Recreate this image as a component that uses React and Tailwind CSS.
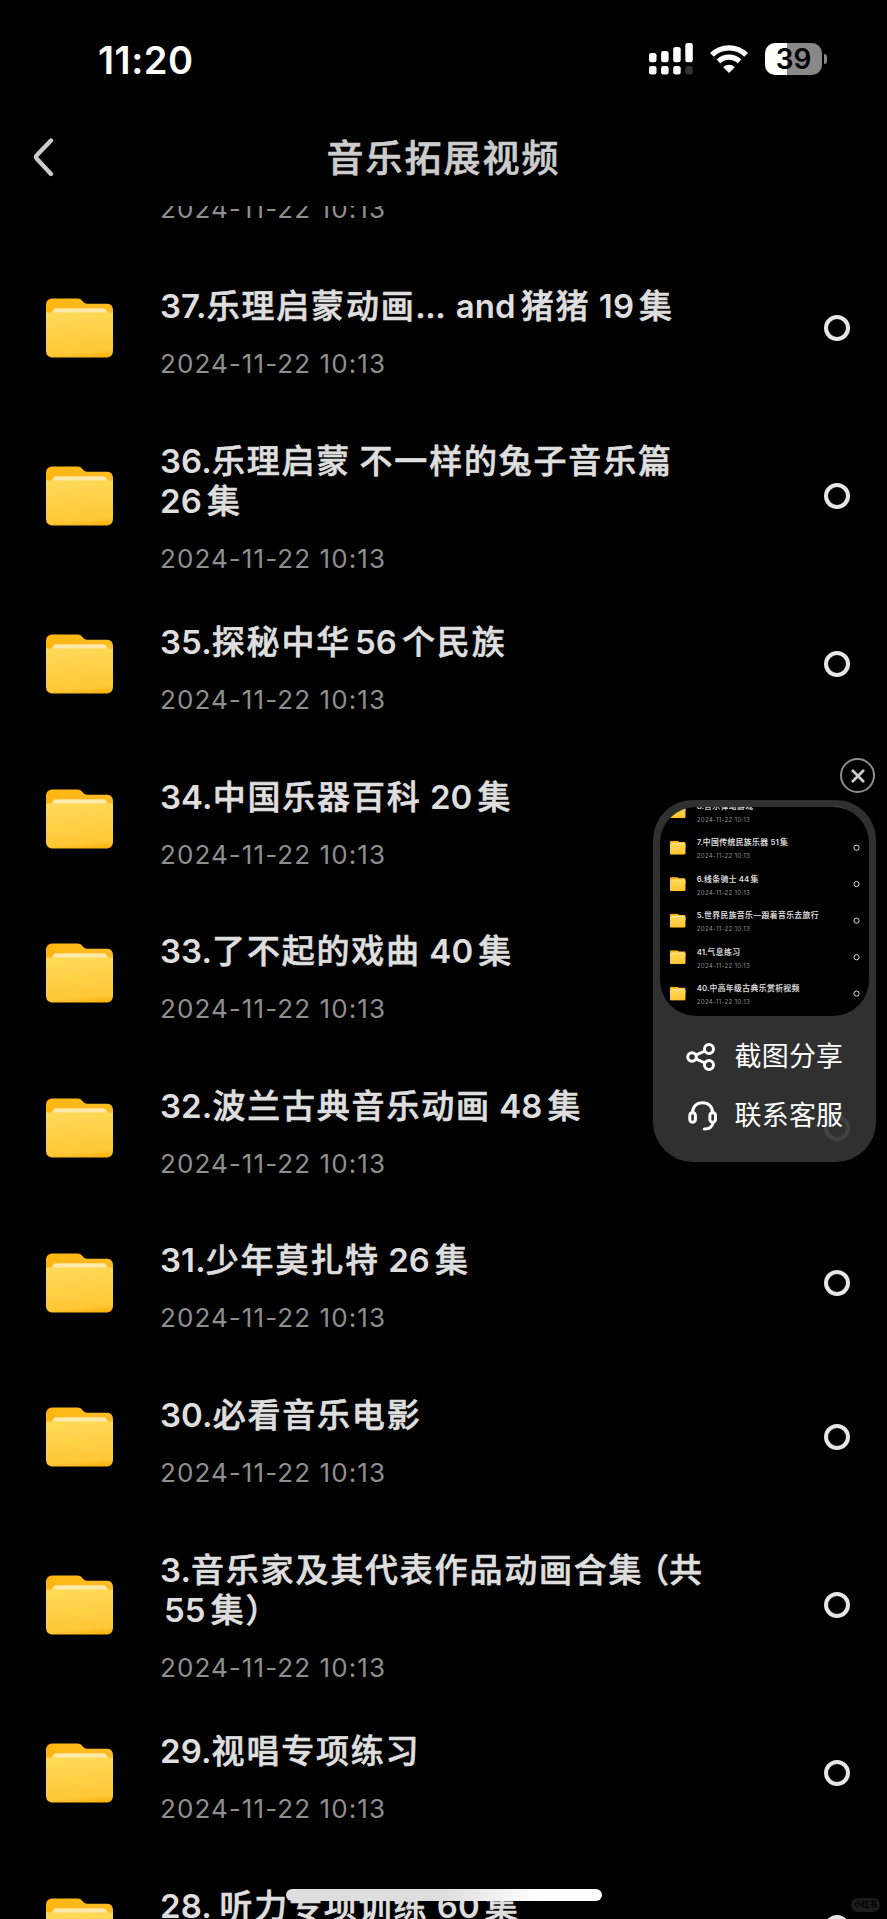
const DATE = "2024-11-22 10:13";

const files = [
  { lines: ["37.乐理启蒙动画… and猪猪 19集"] },
  { lines: ["36.乐理启蒙 不一样的兔子音乐篇", "26集"] },
  { lines: ["35.探秘中华56个民族"] },
  { lines: ["34.中国乐器百科 20集"] },
  { lines: ["33.了不起的戏曲 40集"] },
  { lines: ["32.波兰古典音乐动画 48集"] },
  { lines: ["31.少年莫扎特 26集"] },
  { lines: ["30.必看音乐电影"] },
  { lines: ["3.音乐家及其代表作品动画合集（共", "55集）"], indent: true },
  { lines: ["29.视唱专项练习"] },
  { lines: ["28. 听力专项训练 60集"] },
];

const previewFiles = [
  { lines: ["8.音乐律动游戏"] },
  { lines: ["7.中国传统民族乐器 51集"] },
  { lines: ["6.线条骑士 44集"] },
  { lines: ["5.世界民族音乐—跟着音乐去旅行"] },
  { lines: ["41.气息练习"] },
  { lines: ["40.中高年级古典乐赏析视频"] },
];

function Folder() {
  return (
    <svg className="h-[60px] w-[67px] shrink-0" viewBox="0 0 67 60" fill="none">
      <defs>
        <linearGradient id="front" x1="30" y1="14" x2="34" y2="60" gradientUnits="userSpaceOnUse">
          <stop offset="0" stopColor="#ffd957" />
          <stop offset="0.88" stopColor="#ffc836" />
          <stop offset="1" stopColor="#ffb514" />
        </linearGradient>
        <linearGradient id="back" x1="0" y1="0" x2="67" y2="10" gradientUnits="userSpaceOnUse">
          <stop offset="0" stopColor="#ffb70f" />
          <stop offset="1" stopColor="#ffbb26" />
        </linearGradient>
      </defs>
      <path d="M0 7.500C0 3 2.500.5 7 .5h24.500c2.200 0 3.300.8 4.600 2.200l1.600 1.600c1 1 1.900 1.400 3.300 1.400h19.500c4.500 0 6.500 2.500 6.500 6.500V30H0Z" fill="url(#back)" />
      <path d="M6 16c.4-4 2-5.700 5-5.700h45.500c3 0 4.400 1.700 5 5.700Z" fill="#ffe8a8" />
      <path d="M0 14.400h67v38.100c0 4.500-2.500 7-7 7H7c-4.500 0-7-2.500-7-7Z" fill="url(#front)" />
    </svg>
  );
}

function TitleLine({ text, indent }) {
  const runs = text.match(/[ -~]+|[（）]|[^ -~（）]+/g);
  return (
    <div className={indent ? "flex whitespace-pre pl-[4px]" : "flex whitespace-pre"}>
      {runs.map((run, i) => {
        if (run === "（") return <span key={i} className="ml-[9px] font-medium [-webkit-text-stroke:0.6px_#dedede] [font-feature-settings:'halt']">{run}</span>;
        if (run === "）") return <span key={i} className="font-medium [-webkit-text-stroke:0.6px_#dedede] [font-feature-settings:'halt']">{run}</span>;
        if (/^[ -~]/.test(run)) {
          const lead = i > 0 && run[0] !== " " ? "ml-1" : "";
          const trail = /[0-9a-z]$/.test(run) ? "mr-[5px]" : "";
          return <span key={i} className={`${lead} ${trail} tracking-[0.1px]`}>{run}</span>;
        }
        return <span key={i} className="font-medium tracking-[1.8px] [-webkit-text-stroke:0.6px_#dedede]">{run}</span>;
      })}
    </div>
  );
}

function FileDate() {
  return <div className="text-[26px] leading-[32px] tracking-[1.080px] text-[#8f8f8f]">{DATE}</div>;
}

function FileRow({ file }) {
  return (
    <li className="flex min-h-[154.600px] shrink-0 items-center pl-[46px] pr-[37px]">
      <Folder />
      <div className="ml-[47px] grow self-start pt-[35px] pb-[12.400px]">
        <div className="mb-[22px] text-[33px] leading-[40px] font-semibold text-[#dedede]">
          {file.lines.map((line, i) => (
            <TitleLine key={line} text={line} indent={file.indent && i === 1} />
          ))}
        </div>
        <FileDate />
      </div>
      <span className="size-[26px] shrink-0 rounded-full border-4 border-[#e6e6e6]" />
    </li>
  );
}

function StatusBar() {
  return (
    <div className="flex h-[118px] shrink-0 items-center justify-between pr-[60px] pl-[98px]">
      <span className="pt-px text-[38px] leading-none font-semibold tracking-[0.500px] text-white">11:20</span>
      <div className="flex items-center">
        <svg className="h-8 w-11" viewBox="0 0 44 32" fill="#fff">
          <rect x="0" y="10" width="7.500" height="9.300" rx="2.300" />
          <rect x="12.100" y="8" width="7.500" height="11.300" rx="2.300" />
          <rect x="24.200" y="4" width="7.500" height="15.300" rx="2.300" />
          <rect x="36.300" y="0" width="7.500" height="19.300" rx="2.300" />
          <rect x="0" y="23" width="7.500" height="8.600" rx="2.300" />
          <rect x="12.100" y="23" width="7.500" height="8.600" rx="2.300" />
          <rect x="24.200" y="23" width="7.500" height="8.600" rx="2.300" />
          <rect x="36.300" y="23" width="7.500" height="8.600" rx="2.300" fill="#333" />
        </svg>
        <svg className="ml-[17px] h-7 w-[38px]" viewBox="0 0 38 28" fill="none" stroke="#fff" strokeWidth="5.300">
          <path d="M1.900 9.900a24.300 24.300 0 0 1 34.200 0" />
          <path d="M8.500 16.500a14.900 14.900 0 0 1 21 0" />
          <path d="M13.200 22.200a8.300 8.300 0 0 1 11.600 0L19 28Z" fill="#fff" stroke="none" />
        </svg>
        <div className="ml-[17px] flex h-8 w-[57px] items-center justify-center rounded-[10px] bg-linear-to-r from-white from-[39%] to-[#888] to-[39%] text-[28px] leading-none font-semibold text-black">
          39
        </div>
        <span className="ml-[2px] h-[10px] w-[3px] rounded-r-full bg-[#888]" />
      </div>
    </div>
  );
}

function ShareIcon() {
  return (
    <svg className="h-[30px] w-[31px]" viewBox="0 0 31 30" fill="none" stroke="#fff" strokeWidth="3">
      <circle cx="6" cy="15" r="4.300" />
      <circle cx="23" cy="7" r="4.500" />
      <circle cx="23" cy="23" r="4.500" />
      <path d="M9.700 13.200 19 9M9.700 16.800l9.300 4.200" />
    </svg>
  );
}

function HeadsetIcon() {
  return (
    <svg className="h-[30px] w-[31px]" viewBox="0 0 31 30" fill="none" stroke="#fff" strokeWidth="3" strokeLinecap="round">
      <path d="M6.500 12C6.500 5.800 10.500 1.700 16.500 1.700s10.200 4.100 10.200 10.300" />
      <rect x="3.800" y="11.600" width="5.600" height="9.600" rx="2.800" />
      <rect x="23.900" y="11.600" width="5.600" height="9.600" rx="2.800" />
      <path d="M27 21.600c-.6 4.200-3.500 6.400-8.700 6.400" />
    </svg>
  );
}

function SharePanel() {
  return (
    <div className="absolute top-[758px] right-[11.500px] flex w-[222.500px] flex-col items-end">
      <button className="mr-[0.500px] flex size-[35px] items-center justify-center rounded-full border-2 border-[#8c8c8c] bg-black">
        <svg width="14" height="14" viewBox="0 0 14 14" stroke="#cfcfcf" strokeWidth="2.700" strokeLinecap="round">
          <path d="M1.800 1.800 12.200 12.200M12.200 1.800 1.800 12.200" />
        </svg>
      </button>
      <div className="mt-[7px] h-[361.500px] w-full rounded-[40px] bg-[#343434]/92 px-[6.500px] pt-[6.500px]">
        <div className="h-[209px] overflow-hidden rounded-[36px] bg-black">
          <ul className="-mt-[13.700px] -ml-[0.500px] flex w-[887px] origin-top-left scale-[0.236] flex-col">
            {previewFiles.map((file) => (
              <FileRow key={file.lines[0]} file={file} />
            ))}
          </ul>
        </div>
        <div className="flex h-[82px] items-center pl-[26px] text-[27px] tracking-[0.200px] text-white">
          <ShareIcon />
          <span className="ml-[18px] pt-px">截图分享</span>
        </div>
        <div className="-mt-[23px] flex h-[82px] items-center pl-[26px] text-[27px] tracking-[0.200px] text-white">
          <HeadsetIcon />
          <span className="ml-[18px] pt-px">联系客服</span>
        </div>
      </div>
    </div>
  );
}

export default function App() {
  return (
    <div className="relative flex h-[1919px] w-[887px] flex-col overflow-hidden bg-black font-['Inter','Noto_Sans_CJK_SC',sans-serif]">
      <StatusBar />
      <header className="flex h-[88px] shrink-0 items-center px-8 pb-[9px]">
        <svg className="h-10 w-6" viewBox="0 0 24 40" fill="none" stroke="#ccc" strokeWidth="4.300" strokeLinecap="round" strokeLinejoin="round">
          <path d="M19 2.500 4.800 17.300q-1.600 1.700 0 3.400L19 36" />
        </svg>
        <h1 className="grow pt-[2px] pr-6 text-center text-[37px] font-medium tracking-[2px] text-[#ccc] [-webkit-text-stroke:0.6px_#ccc]">音乐拓展视频</h1>
      </header>
      <div className="h-[1713px] overflow-hidden">
        <div className="-mt-[13px] h-[58px] pl-40">
          <FileDate />
        </div>
        <ul className="flex flex-col">
          {files.map((file) => (
            <FileRow key={file.lines[0]} file={file} />
          ))}
        </ul>
      </div>
      <SharePanel />
      <div className="absolute top-[1889px] left-[286px] h-3 w-[316px] rounded-full bg-linear-to-r from-[#dedede] from-50% to-white to-80%" />
      <div className="absolute right-[7px] bottom-[7px] flex h-[14px] w-[29px] items-center justify-center rounded-full bg-[#1c1c1c] text-[7.500px] font-bold text-black">
        小红书
      </div>
    </div>
  );
}
